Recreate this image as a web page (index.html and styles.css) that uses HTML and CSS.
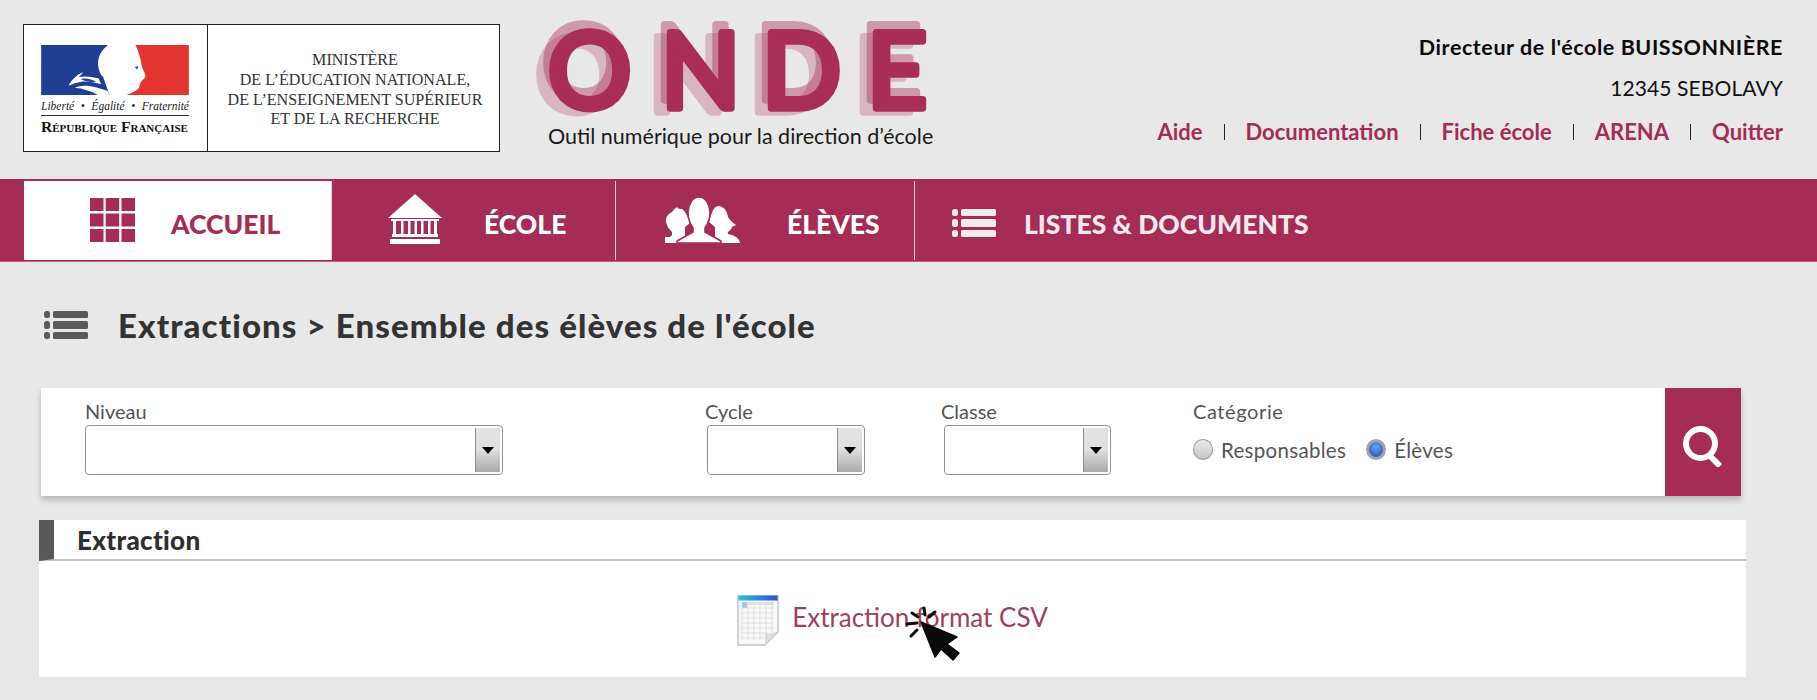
FILE: index.html
```html
<!DOCTYPE html>
<html lang="fr">
<head>
<meta charset="utf-8">
<title>ONDE</title>
<link rel="stylesheet" href="styles.css">
</head>
<body>
<header class="header">
  <div class="gov">
    <div class="gov-left">
      <svg class="flag" viewBox="0 0 443 150" aria-hidden="true">
        <path fill="#1f3f94" d="M0 0H201C180 14 168 40 171 62C173 78 178 88 186 96L205 150H0Z"/>
        <path fill="#e4342f" d="M283 0H443V150H256C274 144 288 136 292 130C296 124 296 114 300 110C304 104 313 100 313 93C313 86 303 72 301 60C299 42 293 22 283 0Z"/>
        <path fill="#fff" d="M82 122C92 104 106 90 125 82C122 88 118 92 112 96C135 92 150 95 172 100L180 118C160 112 140 108 120 110C108 112 94 116 82 122Z"/>
        <path fill="#1f3f94" d="M118 102C132 98 148 102 165 110C150 112 132 110 118 102Z"/>
        <path fill="#fff" d="M100 128C125 118 150 120 200 138L205 150H170C150 138 125 130 100 128Z"/>
        <path fill="#555" d="M281 66L292 62L288 74Z"/>
      </svg>
      <div class="devise"><span>Liberté</span><span>•</span><span>Égalité</span><span>•</span><span>Fraternité</span></div>
      <div class="republique">République Française</div>
    </div>
    <div class="gov-right">
      <div>MINISTÈRE</div>
      <div>DE L’ÉDUCATION NATIONALE,</div>
      <div>DE L’ENSEIGNEMENT SUPÉRIEUR</div>
      <div>ET DE LA RECHERCHE</div>
    </div>
  </div>
  <div class="onde">
    <svg class="onde-logo" viewBox="0 0 420 105" role="img" aria-label="ONDE">
      <defs>
        <filter id="ghost" filterUnits="userSpaceOnUse" x="-10" y="-10" width="440" height="125">
          <feOffset in="SourceAlpha" dx="-13" dy="4" result="o1"/>
          <feFlood flood-color="#a92d57" flood-opacity=".27"/>
          <feComposite in2="o1" operator="in" result="a"/>
          <feOffset in="SourceAlpha" dx="-6" dy="-8" result="o2"/>
          <feFlood flood-color="#a92d57" flood-opacity=".42"/>
          <feComposite in2="o2" operator="in" result="b"/>
          <feMerge><feMergeNode in="a"/><feMergeNode in="b"/><feMergeNode in="SourceGraphic"/></feMerge>
        </filter>
      </defs>
      <text class="onde-word" filter="url(#ghost)" x="18 131 232 337" y="92">ONDE</text>
    </svg>
    <div class="tagline">Outil numérique pour la direction d’école</div>
  </div>
  <div class="user">
    <div class="user-name">Directeur de l'école BUISSONNIÈRE</div>
    <div class="user-place">12345 SEBOLAVY</div>
    <nav class="user-links">
      <a>Aide</a><i></i><a>Documentation</a><i></i><a>Fiche école</a><i></i><a>ARENA</a><i></i><a>Quitter</a>
    </nav>
  </div>
</header>

<nav class="nav">
  <a class="tab tab-home">
    <svg class="ico-grid" viewBox="0 0 45 44" aria-hidden="true">
      <g fill="#a52c55">
        <rect width="13.5" height="13"/><rect x="15.7" width="13.5" height="13"/><rect x="31.5" width="13.5" height="13"/>
        <rect y="15.5" width="13.5" height="13"/><rect x="15.7" y="15.5" width="13.5" height="13"/><rect x="31.5" y="15.5" width="13.5" height="13"/>
        <rect y="31" width="13.5" height="13"/><rect x="15.7" y="31" width="13.5" height="13"/><rect x="31.5" y="31" width="13.5" height="13"/>
      </g>
    </svg>
    <span>ACCUEIL</span>
  </a>
  <a class="tab tab-school">
    <svg class="ico-school" viewBox="0 0 54 50" aria-hidden="true">
      <g fill="#fff">
        <path d="M27 0L54 24H0Z"/>
        <rect x="3" y="25" width="48" height="2"/>
        <rect x="5" y="27" width="3" height="14"/><rect x="13" y="27" width="2.5" height="14"/><rect x="20" y="27" width="2.5" height="14"/><rect x="26.5" y="27" width="2.5" height="14"/><rect x="33" y="27" width="2.5" height="14"/><rect x="40" y="27" width="2.5" height="14"/><rect x="46" y="27" width="3" height="14"/>
        <rect x="4" y="40" width="46" height="3"/>
        <rect x="2" y="45" width="50" height="5"/>
      </g>
    </svg>
    <span>ÉCOLE</span>
  </a>
  <a class="tab tab-pupils">
    <svg class="ico-people" viewBox="0 0 75 46" aria-hidden="true">
      <path fill="#fff" d="M12 10C10 12 8 13 7 15C3 17 0 21 1 25C2 30 5 33 7 35V38L5 40H0V46H20V30L25 26C23 20 20 14 17 12C15 12 13 12 12 10Z"/>
      <path fill="#fff" d="M53 9C59 9 62 14 63 20C64 22 68 26 71 28L67 30C66 33 64 34 63 35V37C68 38 74 40 75 46H50V30L44 25C46 20 47 10 53 9Z"/>
      <path fill="#fff" stroke="#a52c55" stroke-width="1.6" d="M34 0C41 0 45 8 45 16C45 23 42 28 40 31V35L56 44V46H12V44L28 35V31C26 28 23 23 23 16C23 8 27 0 34 0Z"/>
    </svg>
    <span>ÉLÈVES</span>
  </a>
  <a class="tab tab-lists">
    <svg class="ico-list" viewBox="0 0 44 28" aria-hidden="true">
      <g fill="#f3e9ef">
        <rect width="6" height="7" rx="2.5"/><rect x="9" width="35" height="7" rx="1.5"/>
        <rect y="10" width="6" height="8" rx="2.5"/><rect x="9" y="10" width="35" height="8" rx="1.5"/>
        <rect y="21" width="6" height="7" rx="2.5"/><rect x="9" y="21" width="35" height="7" rx="1.5"/>
      </g>
    </svg>
    <span>LISTES &amp; DOCUMENTS</span>
  </a>
</nav>

<h1 class="title">
  <svg class="ico-title" viewBox="0 0 44 28" aria-hidden="true">
    <g fill="#5a5a5c">
      <rect width="6" height="7" rx="2.5"/><rect x="9" width="35" height="7" rx="1.5"/>
      <rect y="10" width="6" height="8" rx="2.5"/><rect x="9" y="10" width="35" height="8" rx="1.5"/>
      <rect y="21" width="6" height="7" rx="2.5"/><rect x="9" y="21" width="35" height="7" rx="1.5"/>
    </g>
  </svg>
  <span>Extractions &gt; Ensemble des élèves de l'école</span>
</h1>

<form class="filters">
  <div class="field field-niveau">
    <label>Niveau</label>
    <div class="select"><div class="select-btn"><b></b></div></div>
  </div>
  <div class="field field-cycle">
    <label>Cycle</label>
    <div class="select"><div class="select-btn"><b></b></div></div>
  </div>
  <div class="field field-classe">
    <label>Classe</label>
    <div class="select"><div class="select-btn"><b></b></div></div>
  </div>
  <div class="field field-cat">
    <label>Catégorie</label>
    <div class="radios">
      <span class="radio"></span><span class="radio-label radio-label-a">Responsables</span>
      <span class="radio radio-on"></span><span class="radio-label">Élèves</span>
    </div>
  </div>
  <div class="search">
    <svg class="ico-search" viewBox="0 0 42 42" aria-hidden="true">
      <circle cx="18.5" cy="18.5" r="14.5" fill="none" stroke="#fff" stroke-width="6"/>
      <path d="M27 30L38 41" stroke="#fff" stroke-width="6" fill="none"/>
    </svg>
  </div>
</form>

<section class="panel">
  <h2 class="panel-head">Extraction</h2>
  <div class="panel-body">
    <svg class="ico-csv" viewBox="0 0 42 52" aria-hidden="true">
      <defs><linearGradient id="csvtop" x1="0" x2="1"><stop offset="0" stop-color="#29c3dc"/><stop offset="1" stop-color="#2750d8"/></linearGradient></defs>
      <path d="M1 2H41V38L28 51H1Z" fill="#f8f8f8" stroke="#c4c4c4" stroke-width="1.5"/>
      <rect x="1.5" y="1.5" width="39" height="5" fill="url(#csvtop)"/>
      <rect x="5" y="8" width="32" height="3" fill="#dfe1e4"/>
      <path d="M5 8V46M11 8V46M17 8V46M23 8V46M29 8V40M35 8V38M5 14H37M5 19H37M5 24H37M5 29H37M5 34H37M5 39H31M5 44H27" stroke="#d8d8d8" stroke-width=".7" fill="none"/>
      <rect x="5" y="8" width="5" height="6" fill="#a9c6ee"/>
      <path d="M28 51V40L40 38Z" fill="#dcdcdc"/>
    </svg>
    <a class="csv-link">Extraction format CSV</a>
    <svg class="cursor" viewBox="0 0 56 56" aria-hidden="true">
      <path fill="#0a0a0a" stroke="#0a0a0a" stroke-width="1.5" stroke-linejoin="round" d="M16 17L52 32L42 39L54 48L48 55L36 44L30 52Z"/>
      <g stroke="#0a0a0a" stroke-width="3" stroke-linecap="round" fill="none">
        <path d="M19 3L20 10"/><path d="M30 7L24 12"/><path d="M7 8L13 12"/><path d="M2 19L12 18"/><path d="M6 31L12 25"/>
      </g>
    </svg>
  </div>
</section>
</body>
</html>
```
FILE: styles.css
```css
* { box-sizing: border-box; }
html, body { margin: 0; padding: 0; }
body {
  width: 1817px;
  height: 700px;
  overflow: hidden;
  background: #e8e8e9;
  font-family: "Lato", "Open Sans", sans-serif;
  color: #111;
}

/* Header */
.header { display: flex; align-items: flex-start; height: 179px; }
.gov {
  display: flex;
  width: 477px;
  height: 128px;
  margin: 24px 0 0 23px;
  background: #fff;
  border: 1px solid #222;
}
.gov-left { width: 184px; border-right: 1px solid #222; padding: 20px 0 0 17px; }
.flag { display: block; width: 148px; height: 50px; }
.devise {
  display: flex;
  justify-content: space-between;
  width: 148px;
  margin-top: 4px;
  padding-bottom: 2px;
  border-bottom: 1px solid #333;
  font: italic 11.5px/14px "Liberation Serif", serif;
  color: #222;
}
.republique {
  width: 148px;
  margin-top: 1px;
  font: bold 15.6px/19px "Liberation Serif", serif;
  font-variant: small-caps;
  white-space: nowrap;
  color: #111;
}
.gov-right {
  flex: 1;
  padding-top: 25px;
  padding-left: 3px;
  text-align: center;
  font: 16.1px/19.8px "Liberation Serif", serif;
  color: #333;
  white-space: nowrap;
}

.onde { width: 420px; margin: 16px 0 0 30px; }
.onde-logo { display: block; width: 420px; height: 105px; overflow: visible; }
.onde-word {
  font: 400 104px "Lato", sans-serif;
  fill: #a92d57;
  stroke: #a92d57;
  stroke-width: 7.5px;
  stroke-linejoin: round;
  stroke-linecap: round;
}
.tagline {
  margin: 0 0 0 18px;
  font-size: 21.5px;
  line-height: 30px;
  white-space: nowrap;
  color: #1a1a1a;
}

.user {
  margin: 34px 34px 0 auto;
  text-align: right;
  white-space: nowrap;
}
.user-name { font-size: 21.5px; line-height: 26px; font-weight: 700; letter-spacing: .57px; color: #0c0c0c; }
.user-place { margin-top: 15px; font-size: 21px; line-height: 26px; letter-spacing: .1px; color: #111; }
.user-links {
  display: flex;
  justify-content: flex-end;
  align-items: center;
  margin-top: 18px;
  font-size: 22px;
  line-height: 26px;
  font-weight: 700;
  color: #a52c55;
}
.user-links i { width: 1px; height: 16px; margin: 0 21px; background: #222; }

/* Navigation */
.nav {
  display: flex;
  height: 83px;
  padding: 2px 0 1px 24px;
  background: #a52c55;
  border-bottom: 1px solid #c9587f;
  font-size: 26.5px;
  font-weight: 900;
  color: #fff;
}
.tab { display: flex; align-items: center; height: 100%; padding-top: 5px; white-space: nowrap; }
.tab span { margin-top: 2px; }
.tab-home { width: 307px; padding-left: 66px; gap: 36px; background: #fff; color: #a52c55; }
.tab-school { width: 285px; padding-left: 56px; gap: 42px; border-right: 1px solid #ecd3dc; border-left: 1px solid #ecd3dc; }
.tab-pupils { width: 299px; padding-left: 49px; gap: 47px; border-right: 1px solid #ecd3dc; }
.tab-lists { padding-left: 37px; gap: 28px; color: #f3e9ef; }
.ico-grid { width: 45px; height: 44px; flex: none; margin-top: -6px; }
.ico-school { width: 54px; height: 50px; flex: none; margin-top: -8px; }
.ico-people { width: 75px; height: 46px; flex: none; margin-top: -6px; }
.ico-list { width: 44px; height: 28px; flex: none; }

/* Title */
.title {
  display: flex;
  align-items: center;
  gap: 30px;
  height: 44px;
  margin: 41px 0 0 44px;
  font-size: 33px;
  letter-spacing: 1.1px;
  font-weight: 900;
  color: #333335;
}
.ico-title { width: 44px; height: 28px; flex: none; }

/* Filters */
.filters {
  display: flex;
  width: 1700px;
  height: 108px;
  margin: 41px 0 0 41px;
  background: #fff;
  box-shadow: 0 4px 6px rgba(0, 0, 0, .22);
}
.field { padding-top: 12px; }
.field label { display: block; height: 25px; font-size: 20px; line-height: 22px; color: #555; }
.field-niveau { width: 418px; margin-left: 44px; }
.field-cycle { width: 158px; margin-left: 204px; }
.field-classe { width: 167px; margin-left: 79px; }
.field-cat { margin-left: 82px; }
.field-cat label { letter-spacing: .6px; }
.field-cycle label { margin-left: -2px; }
.field-classe label { margin-left: -3px; }
.select {
  display: flex;
  justify-content: flex-end;
  height: 50px;
  padding: 2px;
  background: #fff;
  border: 1.5px solid #919191;
  border-radius: 4px;
}
.select-btn {
  display: flex;
  align-items: center;
  justify-content: center;
  width: 25px;
  background: linear-gradient(#e4e4e4 0, #dedede 50%, #a9a9a9 100%);
  border-left: 1.5px solid #8d8d8d;
}
.select-btn b {
  width: 0;
  height: 0;
  border-left: 6px solid transparent;
  border-right: 6px solid transparent;
  border-top: 7px solid #000;
}
.radios {
  display: flex;
  align-items: center;
  height: 21px;
  margin-top: 14px;
  font-size: 20.5px;
  letter-spacing: .3px;
  color: #555;
}
.radio {
  width: 20px;
  height: 21px;
  flex: none;
  border-radius: 50%;
  border: 1px solid #9a9a9a;
  background: linear-gradient(#ececec, #c4c4c4);
}
.radio-on {
  border: 3px solid #a5a5a5;
  background: radial-gradient(circle at 50% 35%, #6ea0ee, #2a5cc4 80%);
}
.radio-label { margin-left: 8px; }
.radio-label-a { margin-right: 20px; }
.search {
  display: flex;
  align-items: center;
  justify-content: center;
  width: 76px;
  margin-left: auto;
  padding-top: 8px;
  background: #a52c55;
}
.ico-search { width: 42px; height: 42px; }

/* Extraction */
.panel { width: 1707px; height: 157px; margin: 24px 0 0 39px; background: #fff; }
.panel-head {
  height: 41px;
  margin: 0;
  padding-left: 23px;
  border-left: 15px solid #58585a;
  border-bottom: 2px solid #c4c4c4;
  font-size: 26px;
  line-height: 40px;
  letter-spacing: .3px;
  font-weight: 900;
  color: #2e2e30;
}
.panel-body {
  position: relative;
  display: flex;
  justify-content: center;
  gap: 13px;
  padding-top: 33px;
}
.ico-csv { width: 42px; height: 52px; flex: none; }
.csv-link { margin-top: 9px; font-size: 26px; line-height: 28px; color: #a03e60; }
.cursor { position: absolute; left: 866px; top: 44px; width: 56px; height: 56px; }
```
